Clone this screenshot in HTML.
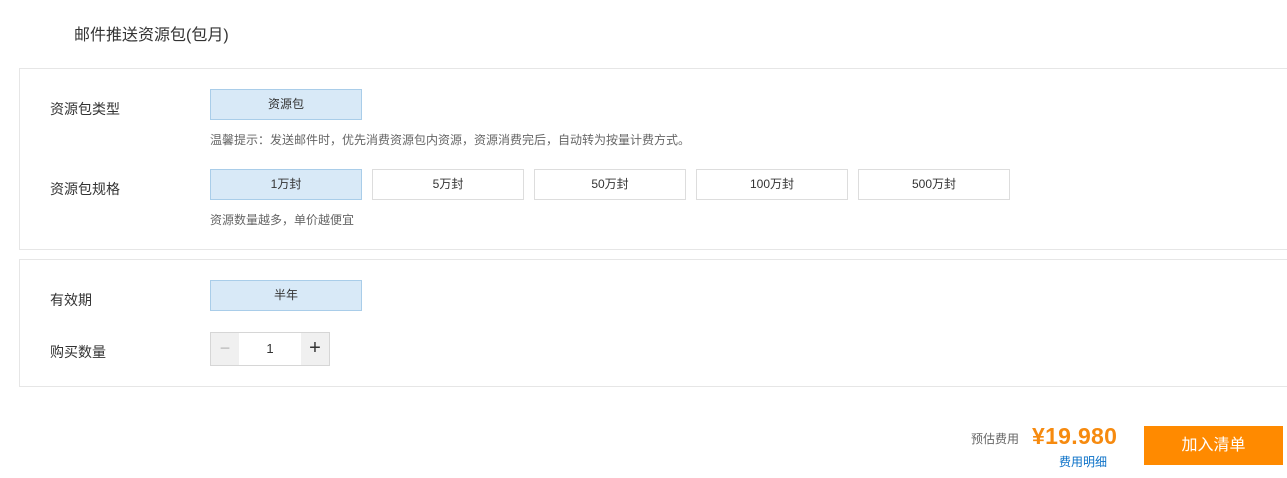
<!DOCTYPE html>
<html><head><meta charset="utf-8"><style>
*{margin:0;padding:0;box-sizing:border-box}
body{width:1287px;height:478px;background:#fff;font-family:"Liberation Sans","Noto Sans CJK SC",sans-serif;color:#333;position:relative;overflow:hidden}
.a{position:absolute}
.panel{position:absolute;left:19px;width:1290px;border:1px solid #e6e6e6;background:#fff}
.lbl{position:absolute;left:50px;font-size:14px;color:#333}
.btn{position:absolute;width:152px;height:31px;border:1px solid #ddd;background:#fff;font-size:12px;color:#333;text-align:center;line-height:29px}
.sel{background:#d8e9f7;border-color:#a9cde9}
.hint{position:absolute;left:210px;font-size:12px;color:#666}
</style></head><body>
<div class="a" style="left:74px;top:21px;font-size:16px;color:#333">邮件推送资源包(包月)</div>
<div class="panel" style="top:68px;height:182px"></div>
<div class="panel" style="top:259px;height:128px"></div>
<div class="lbl" style="top:99px">资源包类型</div>
<div class="btn sel" style="left:210px;top:89px">资源包</div>
<div class="hint" style="top:131px">温馨提示：发送邮件时，优先消费资源包内资源，资源消费完后，自动转为按量计费方式。</div>
<div class="lbl" style="top:179px">资源包规格</div>
<div class="btn sel" style="left:210px;top:169px">1万封</div>
<div class="btn" style="left:372px;top:169px">5万封</div>
<div class="btn" style="left:534px;top:169px">50万封</div>
<div class="btn" style="left:696px;top:169px">100万封</div>
<div class="btn" style="left:858px;top:169px">500万封</div>
<div class="hint" style="top:211px">资源数量越多，单价越便宜</div>
<div class="lbl" style="top:290px">有效期</div>
<div class="btn sel" style="left:210px;top:280px">半年</div>
<div class="lbl" style="top:342px">购买数量</div>
<div class="a" style="left:210px;top:332px;width:120px;height:34px;border:1px solid #d6d6d6;background:#fff">
<div class="a" style="left:0;top:0;width:28px;height:32px;background:#f0f0f0;color:#bbb;text-align:center;line-height:30px;font-size:18px">−</div>
<div class="a" style="left:28px;top:0;width:62px;height:32px;text-align:center;line-height:32px;font-size:13px">1</div>
<div class="a" style="left:90px;top:0;width:28px;height:32px;background:#f0f0f0;color:#333;text-align:center;line-height:30px;font-size:20px">+</div>
</div>
<div class="a" style="left:971px;top:430px;font-size:12px;color:#666">预估费用</div>
<div class="a" style="left:1032px;top:423px;font-size:23px;font-weight:bold;color:#f68a0f;letter-spacing:0.3px">¥19.980</div>
<div class="a" style="left:1059px;top:453px;font-size:12px;color:#0a70c7">费用明细</div>
<div class="a" style="left:1144px;top:426px;width:139px;height:39px;background:#ff8a00;color:#fff;font-size:16px;text-align:center;line-height:39px">加入清单</div>
</body></html>
